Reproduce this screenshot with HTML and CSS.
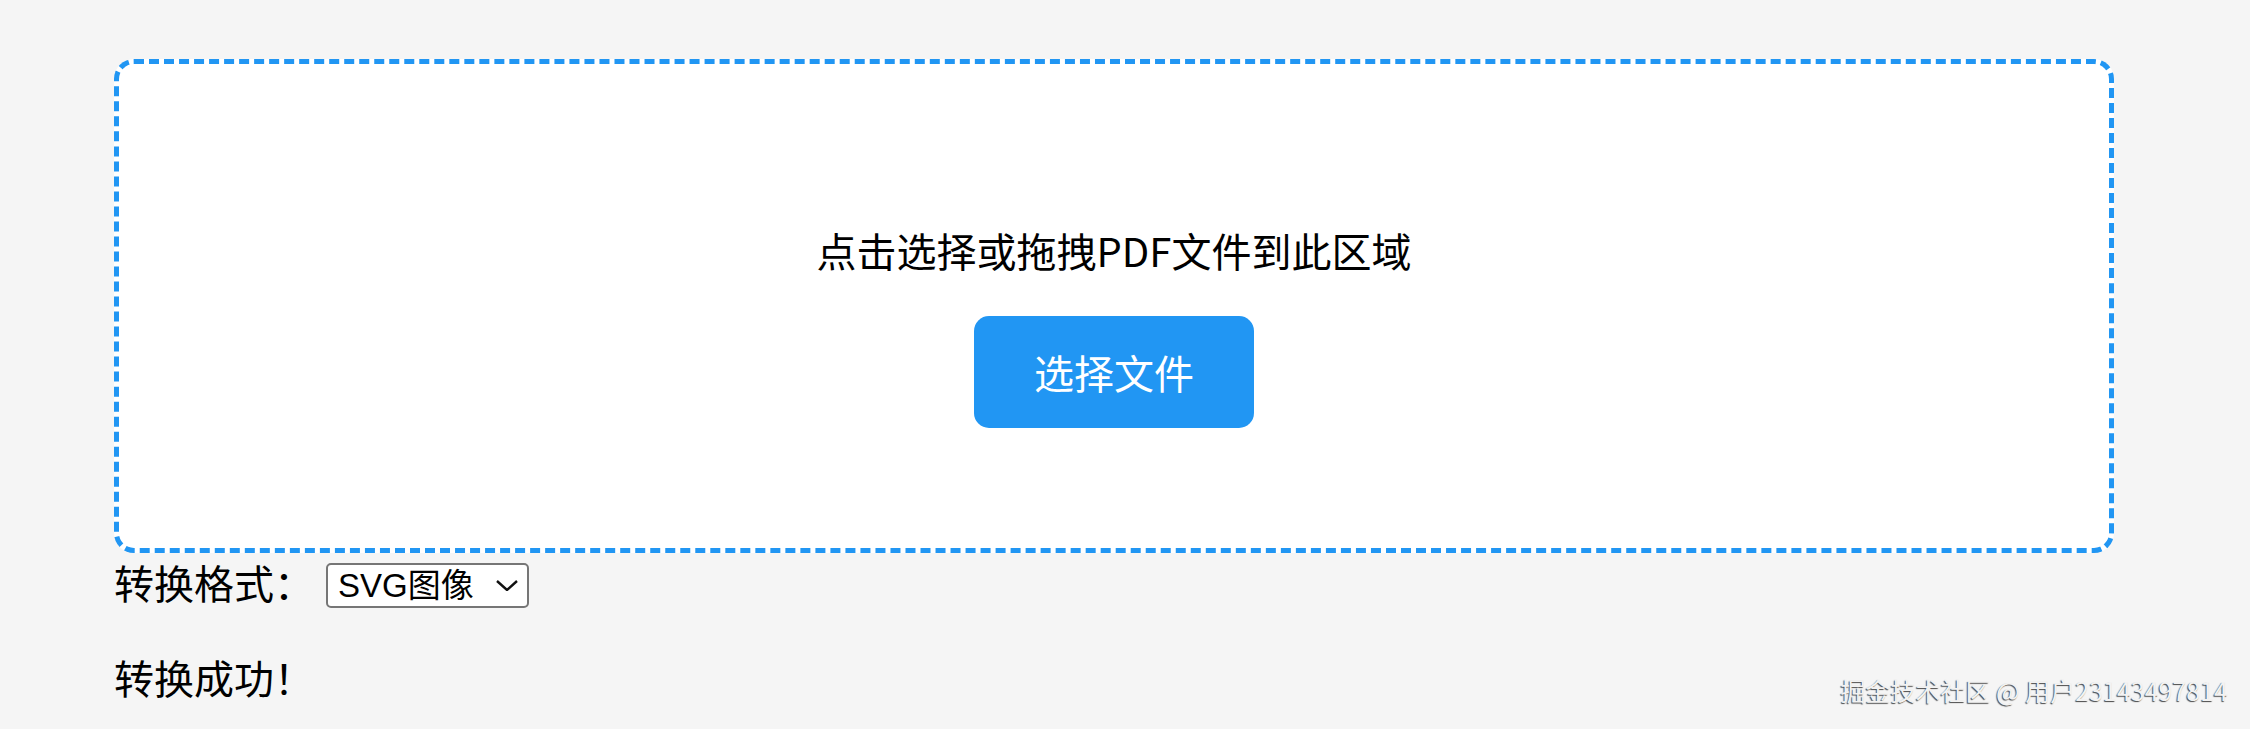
FILE: index.html
```html
<!DOCTYPE html>
<html lang="zh-CN">
<head>
    <meta charset="UTF-8">
    <meta name="viewport" content="width=device-width, initial-scale=1.0">
    <title>PDF 转换</title>
    <link rel="stylesheet" href="styles.css">
</head>
<body>
    <div class="page">
        <div class="drop-zone">
            <p class="drop-hint">点击选择或拖拽PDF文件到此区域</p>
            <button class="pick-button">选择文件</button>
        </div>

        <div class="format-row">
            <label class="format-label" for="format">转换格式：</label>
            <span class="select-wrap">
                <select id="format" class="format-select">
                    <option>SVG图像</option>
                    <option>PNG图像</option>
                </select>
                <svg class="select-arrow" width="22" height="11" viewBox="0 0 22 11">
                    <path d="M1 1 L11 10 L21 1" fill="none" stroke="#111" stroke-width="2.4"/>
                </svg>
            </span>
        </div>

        <p class="status">转换成功！</p>
    </div>

    <div class="watermark">掘金技术社区 @ 用户23143497814</div>
</body>
</html>
```

FILE: styles.css
```css
body {
    margin: 0;
    background-color: #f5f5f5;
    color: #000;
    font-family: "Noto Sans CJK SC", "Liberation Sans", sans-serif;
    overflow: hidden;
}
.page {
    width: 2000px;
    margin-left: 114px;
    padding-top: 59px;
}
.drop-zone {
    border: 5px dashed #2196f3;
    border-radius: 20px;
    background-color: #fff;
    padding: 120px;
    text-align: center;
}
.drop-hint {
    font-size: 40px;
    line-height: 52px;
    margin: 40px 0;
}
.pick-button {
    background-color: #2196f3;
    color: #fff;
    border: none;
    border-radius: 15px;
    font-family: inherit;
    font-size: 40px;
    line-height: 52px;
    padding: 30px 60px;
    cursor: pointer;
}
.format-row {
    display: flex;
    align-items: flex-start;
}
.format-label {
    font-size: 40px;
    line-height: 52px;
    padding-top: 3px;
    margin-right: 12px;
}
.select-wrap {
    position: relative;
    margin-top: 10px;
}
.format-select {
    appearance: none;
    width: 203px;
    height: 45px;
    padding: 0 0 0 10px;
    border: 2px solid #767676;
    border-radius: 5px;
    background-color: #fff;
    color: #000;
    font-family: "Liberation Sans", "Noto Sans CJK SC", sans-serif;
    font-size: 33px;
}
.select-arrow {
    position: absolute;
    left: 170px;
    top: 17px;
    pointer-events: none;
}
.status {
    font-size: 40px;
    line-height: 52px;
    margin: 43px 0 0;
}
.watermark {
    position: absolute;
    right: 22px;
    bottom: 26px;
    font-size: 25px;
    line-height: 1;
    color: #f2f2f2;
    text-shadow: -1px 1px 1px rgba(0, 0, 0, 0.7);
}
```
